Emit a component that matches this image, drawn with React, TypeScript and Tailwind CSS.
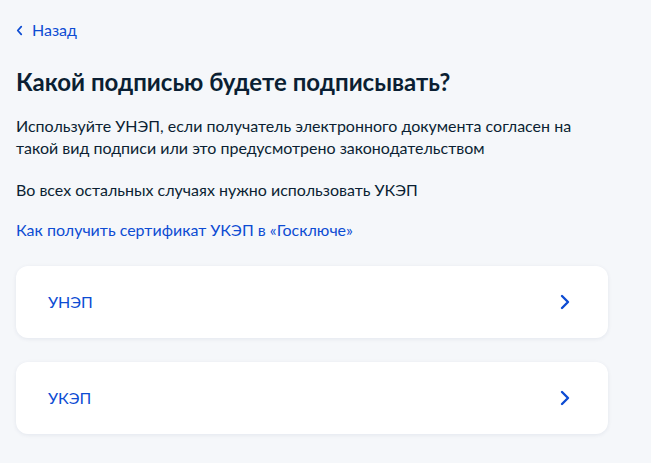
const options = ["УНЭП", "УКЭП"];

function Chevron({ className }: { className?: string }) {
  return (
    <svg viewBox="0 0 10 16" className={className} fill="none">
      <path d="M2 2l6 6-6 6" stroke="currentColor" strokeWidth="2.4" strokeLinecap="round" strokeLinejoin="round" />
    </svg>
  );
}

export default function App() {
  return (
    <div className="min-h-[463px] bg-[#f5f7fa] px-4 pt-[18px] font-['Lato',sans-serif] text-[#0b1f33]">
      <a className="flex items-center gap-[9px] text-[16px] leading-6 text-[#0d4cd3]">
        <svg viewBox="0 0 8 12" className="h-[11px] w-[7px]" fill="none">
          <path d="M6 1.5L2 6l4 4.5" stroke="currentColor" strokeWidth="2" strokeLinecap="round" strokeLinejoin="round" />
        </svg>
        Назад
      </a>

      <h1 className="mt-[24px] text-[24px] font-bold leading-8">Какой подписью будете подписывать?</h1>

      <p className="mt-[17px] max-w-[580px] text-[16px] leading-[22px]">
        Используйте УНЭП, если получатель электронного документа согласен на такой вид подписи или это предусмотрено законодательством
      </p>
      <p className="mt-[20px] text-[16px] leading-[22px]">Во всех остальных случаях нужно использовать УКЭП</p>
      <p className="mt-[18px] text-[16px] leading-[22px] text-[#0d4cd3]">Как получить сертификат УКЭП в «Госключе»</p>

      <div className="mt-[25px] flex w-[592px] flex-col gap-6">
        {options.map((item) => (
          <div
            key={item}
            className="flex h-[72px] items-center justify-between rounded-xl bg-white pl-8 pr-[38px] shadow-[0_1px_4px_rgba(14,44,94,0.08)]"
          >
            <span className="text-[16px] text-[#0d4cd3]">{item}</span>
            <Chevron className="h-[16px] w-[10px] text-[#0d4cd3]" />
          </div>
        ))}
      </div>
    </div>
  );
}
